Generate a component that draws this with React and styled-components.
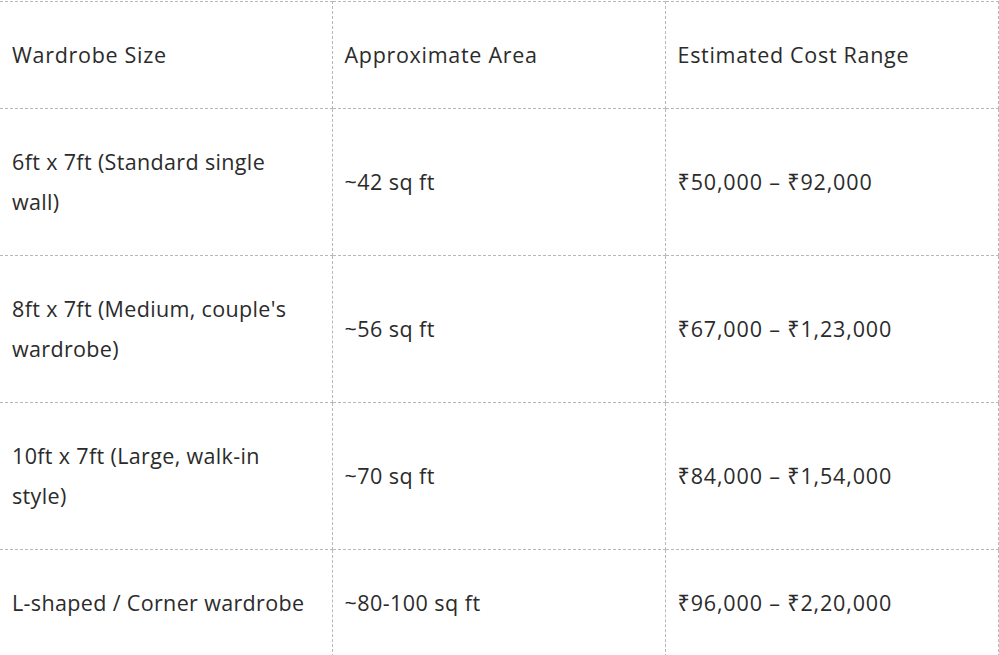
import React from 'react'
import styled, { createGlobalStyle } from 'styled-components'

const GlobalStyle = createGlobalStyle`
  html, body {
    margin: 0;
    padding: 0;
    background: #fff;
  }
  body {
    font-family: 'Open Sans', 'Noto Sans', sans-serif;
    color: #2b2b2b;
  }
`

const Frame = styled.div`
  width: 999px;
  height: 655px;
  overflow: hidden;
`

const Table = styled.table`
  width: 998px;
  table-layout: fixed;
  border-collapse: collapse;
  margin-top: 1px;

  col:nth-child(1) { width: 332px; }
  col:nth-child(2) { width: 333px; }
  col:nth-child(3) { width: 333px; }
`

const spacing = {
  head: '0.7px',
  size: '0.35px',
  area: '0.45px',
  cost: '0.85px',
}

const Cell = styled.td`
  border: 1px dashed #b8b8b8;
  padding: 33px 12px;
  font-size: 21.5px;
  line-height: 40px;
  vertical-align: middle;
  text-align: left;
  font-weight: 400;
  letter-spacing: ${props => spacing[props.kind] || '0.2px'};

  &:first-child {
    border-left: none;
    padding-right: ${props => (props.kind === 'size' ? '24px' : '12px')};
  }
`

const HeadCell = styled(Cell).attrs({ as: 'th' })``

const rows = [
  ['6ft x 7ft (Standard single wall)', '~42 sq ft', '₹50,000 – ₹92,000'],
  ["8ft x 7ft (Medium, couple's wardrobe)", '~56 sq ft', '₹67,000 – ₹1,23,000'],
  ['10ft x 7ft (Large, walk-in style)', '~70 sq ft', '₹84,000 – ₹1,54,000'],
  ['L-shaped / Corner wardrobe', '~80-100 sq ft', '₹96,000 – ₹2,20,000'],
]

export default function App() {
  return (
    <Frame>
      <GlobalStyle />
      <Table>
        <colgroup>
          <col />
          <col />
          <col />
        </colgroup>
        <thead>
          <tr>
            <HeadCell kind="head">Wardrobe Size</HeadCell>
            <HeadCell kind="head">Approximate Area</HeadCell>
            <HeadCell kind="head">Estimated Cost Range</HeadCell>
          </tr>
        </thead>
        <tbody>
          {rows.map(r => (
            <tr key={r[0]}>
              <Cell kind="size">{r[0]}</Cell>
              <Cell kind="area">{r[1]}</Cell>
              <Cell kind="cost">{r[2]}</Cell>
            </tr>
          ))}
        </tbody>
      </Table>
    </Frame>
  )
}
